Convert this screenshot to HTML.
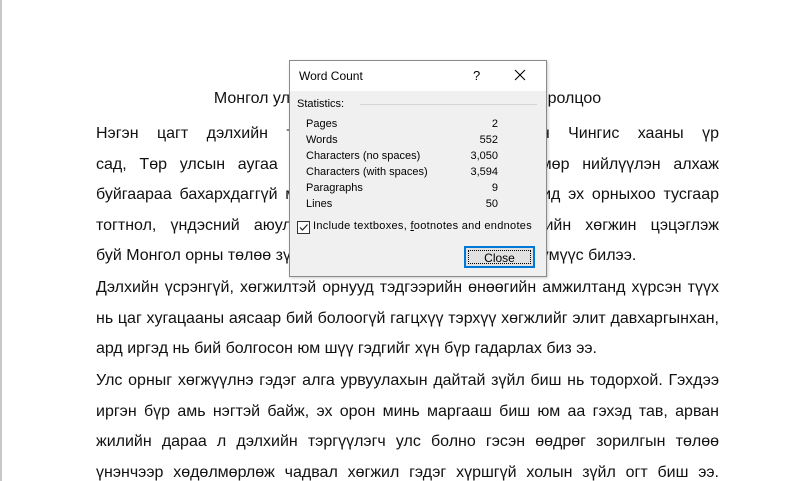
<!DOCTYPE html>
<html><head><meta charset="utf-8"><style>
html,body{margin:0;padding:0;width:806px;height:481px;overflow:hidden;background:#fff;}
body{position:relative;font-family:"Liberation Sans",Arial,sans-serif;}
.edge{position:absolute;left:0;top:0;width:2px;height:481px;background:#c8c8c8;}
.doc{position:absolute;left:96px;width:623px;font-size:16px;color:#111;}
.l{position:absolute;left:0;width:623px;height:20px;line-height:20px;white-space:nowrap;text-align:justify;text-align-last:justify;}
.l.e{text-align-last:left;}
.title{position:absolute;left:0;width:623px;text-align:center;top:89px;line-height:20px;}
.dlg{position:absolute;left:289px;top:60px;width:256px;height:215px;background:#f0f0f0;border:1px solid #8a8a8a;font-family:"Liberation Sans",sans-serif;font-size:11px;color:#000;box-shadow:1px 1px 3px rgba(0,0,0,.2);}
.tb{position:absolute;left:0;top:0;width:256px;height:30px;background:#fff;}
.tb .t{position:absolute;left:9px;top:8px;font-size:12px;}
.tb .q{position:absolute;left:183px;top:7px;font-size:13px;}
.tb .x{position:absolute;left:224px;top:8px;}
.stat{position:absolute;left:7px;top:37px;}
.hr{position:absolute;left:70px;right:9px;top:43px;height:1px;background:#d5d5d5;}
.row{position:absolute;left:16px;width:192px;}
.row span{position:absolute;right:0;top:0;}
.cb{position:absolute;left:7px;top:160px;width:11px;height:11px;border:1px solid #333;background:#fff;}
.cbl{position:absolute;left:23px;top:159px;letter-spacing:0.3px;}
.btn{position:absolute;left:174px;top:185px;width:71px;height:22px;border:2px solid #0078d7;background:#e1e1e1;box-sizing:border-box;}
.btn div{position:absolute;left:2px;top:2px;right:2px;bottom:2px;border:1px dotted #000;text-align:center;line-height:14px;font-size:12px;}
</style></head><body>
<div class="edge"></div>
<div class="doc">
<div class="title">Монгол улсын хөгжлийн өнөөгийн төлөв ба оролцоо</div>
<div class="l" style="top:124px">Нэгэн цагт дэлхийн талыг эзэлж байсан их хаан Чингис хааны үр</div>
<div class="l" style="top:155px">сад, Төр улсын аугаа их түүхийг өвлөн авсан бид мөр нийлүүлэн алхаж</div>
<div class="l" style="top:185px">буйгаараа бахархдаггүй монгол хүн гэж байхгүй билээ. Бид эх орныхоо тусгаар</div>
<div class="l" style="top:216px">тогтнол, үндэсний аюулгүй байдлыг хангаж, шинэ үеийн хөгжин цэцэглэж</div>
<div class="l e" style="top:246px">буй Монгол орны төлөө зүтгэж явдаг эрдэмтэн, бахархсан хүмүүс билээ.</div>
<div class="l" style="top:278px">Дэлхийн үсрэнгүй, хөгжилтэй орнууд тэдгээрийн өнөөгийн амжилтанд хүрсэн түүх</div>
<div class="l" style="top:309px">нь цаг хугацааны аясаар бий болоогүй гагцхүү тэрхүү хөгжлийг элит давхаргынхан,</div>
<div class="l e" style="top:339px">ард иргэд нь бий болгосон юм шүү гэдгийг хүн бүр гадарлах биз ээ.</div>
<div class="l" style="top:371px">Улс орныг хөгжүүлнэ гэдэг алга урвуулахын дайтай зүйл биш нь тодорхой. Гэхдээ</div>
<div class="l" style="top:402px">иргэн бүр амь нэгтэй байж, эх орон минь маргааш биш юм аа гэхэд тав, арван</div>
<div class="l" style="top:432px">жилийн дараа л дэлхийн тэргүүлэгч улс болно гэсэн өөдрөг зорилгын төлөө</div>
<div class="l" style="top:463px">үнэнчээр хөдөлмөрлөж чадвал хөгжил гэдэг хүршгүй холын зүйл огт биш ээ.</div>
</div>
<div class="dlg">
<div class="tb"><div class="t">Word Count</div><div class="q">?</div>
<svg class="x" width="12" height="12" viewBox="0 0 12 12"><path d="M1 1L11 11M11 1L1 11" stroke="#000" stroke-width="1.1"/></svg></div>
<div class="stat">Statistics:</div><div class="hr"></div>
<div class="row" style="top:57px">Pages<span>2</span></div>
<div class="row" style="top:73px">Words<span>552</span></div>
<div class="row" style="top:89px">Characters (no spaces)<span>3,050</span></div>
<div class="row" style="top:105px">Characters (with spaces)<span>3,594</span></div>
<div class="row" style="top:121px">Paragraphs<span>9</span></div>
<div class="row" style="top:137px">Lines<span>50</span></div>
<div class="cb"><svg width="11" height="11" viewBox="0 0 11 11" style="position:absolute;left:0;top:0"><path d="M2 5.5L4.5 8L9.5 2.5" stroke="#222" stroke-width="1.2" fill="none"/></svg></div>
<div class="cbl">Include textboxes, <u>f</u>ootnotes and endnotes</div>
<div class="btn"><div>Close</div></div>
</div>
</body></html>
